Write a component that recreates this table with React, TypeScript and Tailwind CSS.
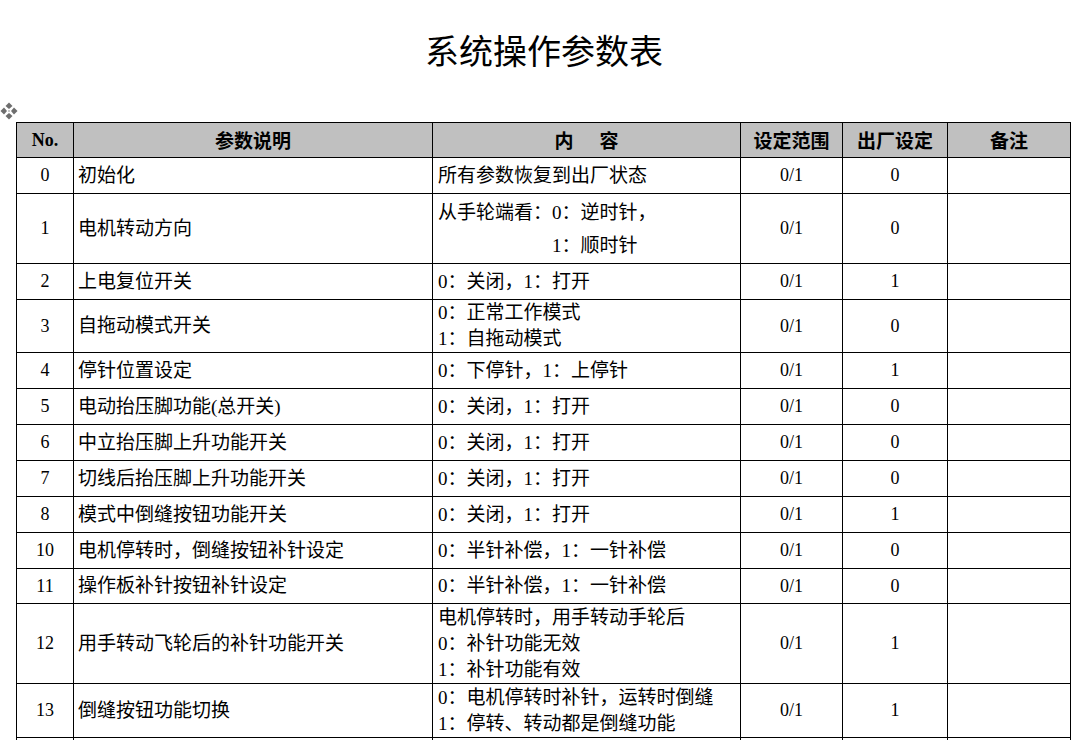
const rows = [
  { no: "0", name: "初始化", content: ["所有参数恢复到出厂状态"], range: "0/1", def: "0", h: "h-[36px]" },
  { no: "1", name: "电机转动方向", content: ["从手轮端看：0：逆时针，", "1：顺时针"], range: "0/1", def: "0", h: "h-[70px]", indent: true },
  { no: "2", name: "上电复位开关", content: ["0：关闭，1：打开"], range: "0/1", def: "1", h: "h-[36px]" },
  { no: "3", name: "自拖动模式开关", content: ["0：正常工作模式", "1：自拖动模式"], range: "0/1", def: "0", h: "h-[53px]" },
  { no: "4", name: "停针位置设定", content: ["0：下停针，1：上停针"], range: "0/1", def: "1", h: "h-[36px]" },
  { no: "5", name: "电动抬压脚功能(总开关)", content: ["0：关闭，1：打开"], range: "0/1", def: "0", h: "h-[36px]" },
  { no: "6", name: "中立抬压脚上升功能开关", content: ["0：关闭，1：打开"], range: "0/1", def: "0", h: "h-[36px]" },
  { no: "7", name: "切线后抬压脚上升功能开关", content: ["0：关闭，1：打开"], range: "0/1", def: "0", h: "h-[36px]" },
  { no: "8", name: "模式中倒缝按钮功能开关", content: ["0：关闭，1：打开"], range: "0/1", def: "1", h: "h-[36px]" },
  { no: "10", name: "电机停转时，倒缝按钮补针设定", content: ["0：半针补偿，1：一针补偿"], range: "0/1", def: "0", h: "h-[36px]" },
  { no: "11", name: "操作板补针按钮补针设定", content: ["0：半针补偿，1：一针补偿"], range: "0/1", def: "0", h: "h-[35px]" },
  { no: "12", name: "用手转动飞轮后的补针功能开关", content: ["电机停转时，用手转动手轮后", "0：补针功能无效", "1：补针功能有效"], range: "0/1", def: "1", h: "h-[80px]" },
  { no: "13", name: "倒缝按钮功能切换", content: ["0：电机停转时补针，运转时倒缝", "1：停转、转动都是倒缝功能"], range: "0/1", def: "1", h: "h-[54px]" },
];

// table move handle shown by the editor
const MoveHandle = () => (
  <svg width="18" height="18" viewBox="0 0 18 18" className="absolute left-0 top-[102px]">
    <g fill="#6e6e6e">
      <path d="M9 0.5 L12.5 4 L9 7 L5.5 4 Z" />
      <path d="M9 17.5 L12.5 14 L9 11 L5.5 14 Z" />
      <path d="M0.5 9 L4 5.5 L7 9 L4 12.5 Z" />
      <path d="M17.5 9 L14 5.5 L11 9 L14 12.5 Z" />
    </g>
    <g fill="#c8c8c8">
      <rect x="8" y="8" width="2" height="2" />
    </g>
  </svg>
);

export default function App() {
  const cell = "border border-black px-[5px] align-middle";
  const head = "font-['Noto_Sans_CJK_SC',sans-serif] text-[19px]";
  return (
    <div className="relative min-h-[740px] bg-white text-black font-['Liberation_Serif','Noto_Sans_CJK_SC',serif]">
      <h1 className="pt-[28px] text-center text-[34px] leading-[44px] font-normal font-['Noto_Sans_CJK_SC',sans-serif]">
        系统操作参数表
      </h1>
      <MoveHandle />
      <table className="ml-[16px] mt-[50px] w-[1054px] table-fixed border-collapse text-[18px]">
        <colgroup>
          <col className="w-[57px]" />
          <col className="w-[359px]" />
          <col className="w-[308px]" />
          <col className="w-[102px]" />
          <col className="w-[105px]" />
          <col className="w-[123px]" />
        </colgroup>
        <thead>
          <tr className="h-[35px] bg-[#c0c0c0] font-bold">
            <th className={`${cell} text-center text-[18px]`}>No.</th>
            <th className={`${cell} text-center ${head}`}>参数说明</th>
            <th className={`${cell} ${head}`}>
              <div className="flex justify-center gap-[26px]">
                <span>内</span>
                <span>容</span>
              </div>
            </th>
            <th className={`${cell} px-0 text-center ${head}`}>设定范围</th>
            <th className={`${cell} px-0 text-center ${head}`}>出厂设定</th>
            <th className={`${cell} text-center ${head}`}>备注</th>
          </tr>
        </thead>
        <tbody>
          {rows.map((r) => (
            <tr key={r.no} className={r.h}>
              <td className={`${cell} text-center`}>{r.no}</td>
              <td className={`${cell} pl-[4px] text-[19px] leading-[26px]`}>{r.name}</td>
              <td className={`${cell} text-[19px] ${r.indent ? "leading-[33px]" : "leading-[26px]"}`}>
                {r.content.map((line, i) => (
                  <div key={i} className={r.indent && i === 1 ? "pl-[114px]" : ""}>
                    {line}
                  </div>
                ))}
              </td>
              <td className={`${cell} text-center`}>{r.range}</td>
              <td className={`${cell} text-center`}>{r.def}</td>
              <td className={cell}></td>
            </tr>
          ))}
          <tr className="h-[36px]">
            <td className={cell}></td>
            <td className={cell}></td>
            <td className={cell}></td>
            <td className={cell}></td>
            <td className={cell}></td>
            <td className={cell}></td>
          </tr>
        </tbody>
      </table>
    </div>
  );
}
